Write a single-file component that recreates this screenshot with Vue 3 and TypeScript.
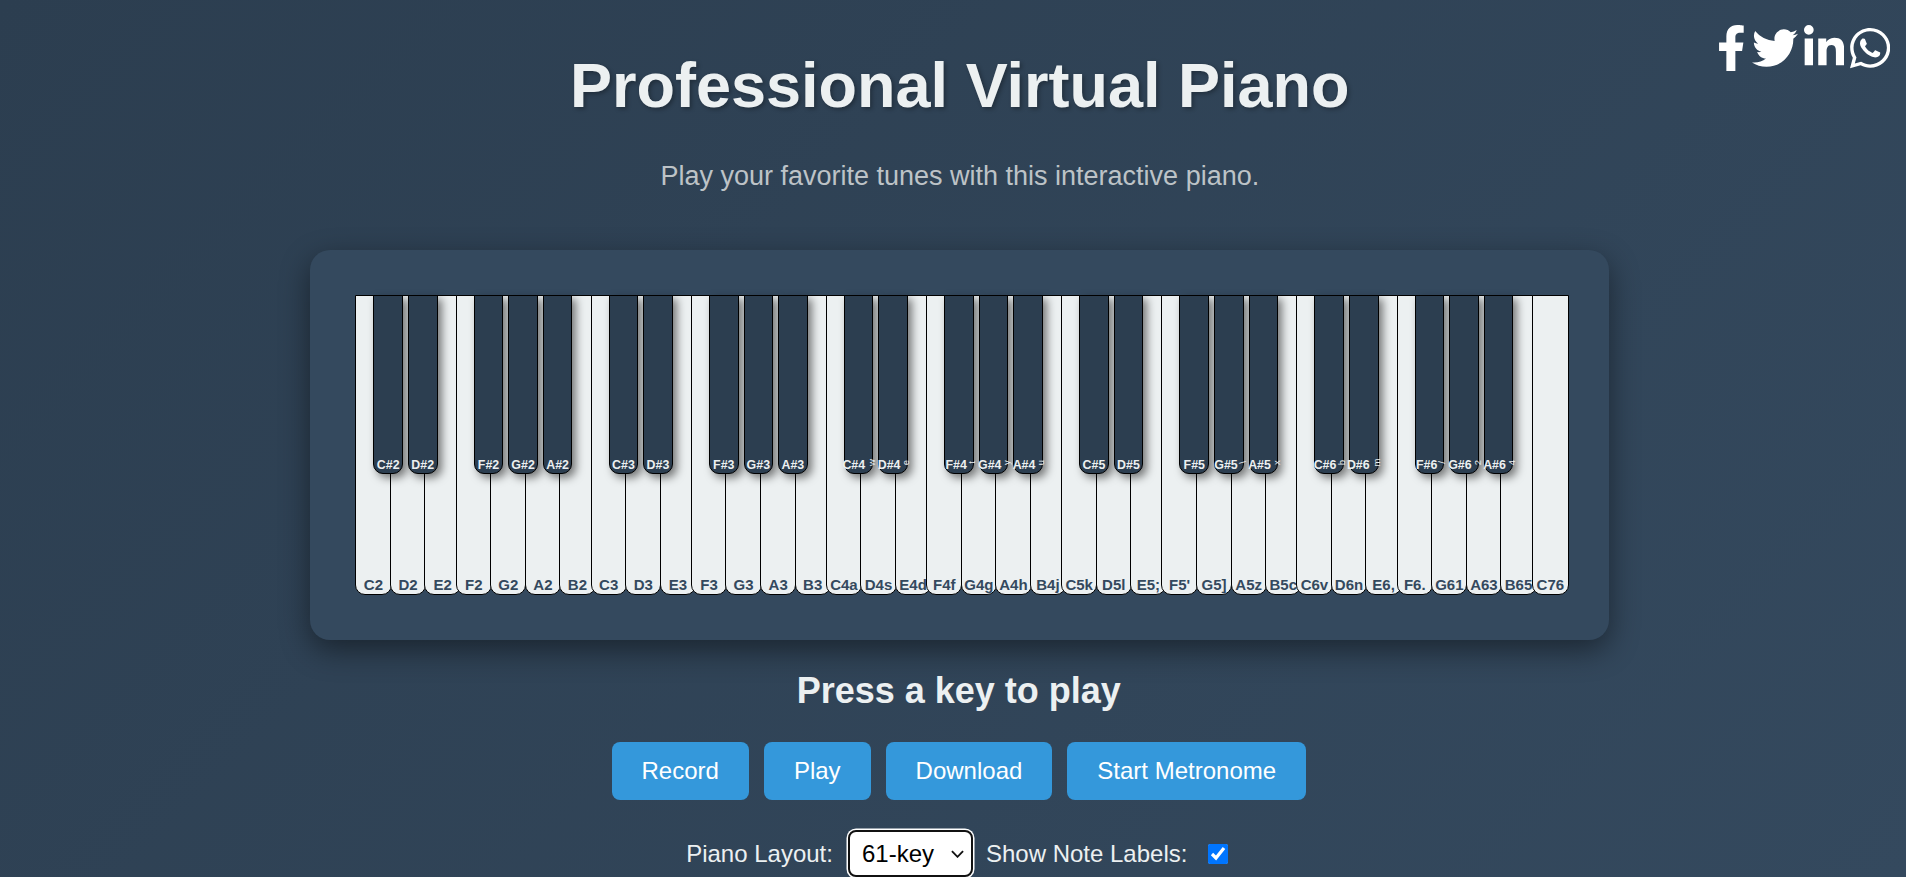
<script setup lang="ts">
import { ref } from 'vue'

interface PianoKey {
  name: string
  black: boolean
  hint: string
}

const whiteHints: Record<string, string> = {
  C4: 'a', D4: 's', E4: 'd', F4: 'f', G4: 'g', A4: 'h', B4: 'j',
  C5: 'k', D5: 'l', E5: ';', F5: "'", G5: ']', A5: 'z', B5: 'c',
  C6: 'v', D6: 'n', E6: ',', F6: '.', G6: '1', A6: '3', B6: '5', C7: '6'
}
const blackHints: Record<string, string> = {
  'C#4': 'w', 'D#4': 'e', 'F#4': 't', 'G#4': 'y', 'A#4': 'u',
  'G#5': '\\', 'A#5': 'x', 'C#6': 'b', 'D#6': 'm',
  'F#6': '/', 'G#6': '2', 'A#6': '4'
}

const keys: PianoKey[] = []
const scale = ['C', 'C#', 'D', 'D#', 'E', 'F', 'F#', 'G', 'G#', 'A', 'A#', 'B']
for (let octave = 2; octave <= 6; octave++) {
  for (const note of scale) {
    const name = note + octave
    const black = note.includes('#')
    keys.push({ name, black, hint: black ? blackHints[name] ?? '' : whiteHints[name] ?? '' })
  }
}
keys.push({ name: 'C7', black: false, hint: '6' })

const layout = ref('61-key')
const showLabels = ref(true)
</script>

<template>
  <div class="page">
    <nav class="social">
      <a class="social-link" aria-label="Facebook">
        <svg class="icon" viewBox="0 0 320 512"><path d="M279.14 288l14.22-92.66h-88.91v-60.13c0-25.35 12.42-50.06 52.24-50.06h40.42V6.26S260.43 0 225.36 0c-73.22 0-121.08 44.38-121.08 124.72v70.62H22.89V288h81.39v224h100.17V288z" /></svg>
      </a>
      <a class="social-link" aria-label="Twitter">
        <svg class="icon" viewBox="0 0 512 512"><path d="M459.37 151.716c.325 4.548.325 9.097.325 13.645 0 138.72-105.583 298.558-298.558 298.558-59.452 0-114.68-17.219-161.137-47.106 8.447.974 16.568 1.299 25.34 1.299 49.055 0 94.213-16.568 130.274-44.832-46.132-.975-84.792-31.188-98.112-72.772 6.498.974 12.995 1.624 19.818 1.624 9.421 0 18.843-1.3 27.614-3.573-48.081-9.747-84.143-51.98-84.143-102.985v-1.299c13.969 7.797 30.214 12.67 47.431 13.319-28.264-18.843-46.781-51.005-46.781-87.391 0-19.492 5.197-37.36 14.294-52.954 51.655 63.675 129.3 105.258 216.365 109.807-1.624-7.797-2.599-15.918-2.599-24.04 0-57.828 46.782-104.934 104.934-104.934 30.213 0 57.502 12.67 76.67 33.137 23.715-4.548 46.456-13.32 66.599-25.34-7.798 24.366-24.366 44.833-46.132 57.827 21.117-2.273 41.584-8.122 60.426-16.243-14.292 20.791-32.161 39.308-52.628 54.253z" /></svg>
      </a>
      <a class="social-link" aria-label="LinkedIn">
        <svg class="icon" viewBox="0 0 448 512"><path d="M100.28 448H7.4V148.9h92.88zM53.79 108.1C24.09 108.1 0 83.5 0 53.8a53.79 53.79 0 0 1 107.58 0c0 29.7-24.1 54.3-53.79 54.3zM447.9 448h-92.68V302.4c0-34.7-.7-79.2-48.29-79.2-48.29 0-55.69 37.7-55.69 76.7V448h-92.78V148.9h89.08v40.8h1.3c12.4-23.5 42.69-48.3 87.88-48.3 94 0 111.28 61.9 111.28 142.3V448z" /></svg>
      </a>
      <a class="social-link" aria-label="WhatsApp">
        <svg class="icon" viewBox="0 0 448 512"><path d="M380.9 97.1C339 55.1 283.2 32 223.9 32c-122.4 0-222 99.6-222 222 0 39.1 10.2 77.3 29.6 111L0 480l117.7-30.9c32.4 17.7 68.9 27 106.1 27h.1c122.3 0 224.1-99.6 224.1-222 0-59.3-25.2-115-67.1-157zm-157 341.6c-33.2 0-65.7-8.9-94-25.7l-6.7-4-69.8 18.3L72 359.2l-4.4-7c-18.5-29.4-28.2-63.3-28.2-98.2 0-101.7 82.8-184.5 184.6-184.5 49.3 0 95.6 19.2 130.4 54.1 34.8 34.9 56.2 81.2 56.1 130.5 0 101.8-84.9 184.6-186.6 184.6zm101.2-138.2c-5.5-2.8-32.8-16.2-37.9-18-5.1-1.9-8.8-2.8-12.5 2.8-3.7 5.6-14.3 18-17.6 21.8-3.2 3.7-6.5 4.2-12 1.4-32.6-16.3-54-29.1-75.5-66-5.7-9.8 5.7-9.1 16.3-30.3 1.8-3.7.9-6.9-.5-9.7-1.4-2.8-12.5-30.1-17.1-41.2-4.5-10.8-9.1-9.3-12.5-9.5-3.2-.2-6.9-.2-10.6-.2-3.7 0-9.7 1.4-14.8 6.9-5.1 5.6-19.4 19-19.4 46.3 0 27.3 19.9 53.7 22.6 57.4 2.8 3.7 39.1 59.7 94.8 83.8 35.2 15.2 49 16.5 66.6 13.9 10.7-1.6 32.8-13.4 37.4-26.4 4.6-13 4.6-24.1 3.2-26.4-1.3-2.5-5-3.9-10.5-6.6z" /></svg>
      </a>
    </nav>

    <main class="content">
      <h1 class="title">Professional Virtual Piano</h1>
      <p class="subtitle">Play your favorite tunes with this interactive piano.</p>

      <section class="panel">
        <div class="keyboard">
          <div
            v-for="key in keys"
            :key="key.name"
            class="key"
            :class="key.black ? 'black' : 'white'"
          >
            <span v-if="showLabels" class="label">{{ key.name }}<template v-if="!key.black">{{ key.hint }}</template><span v-else-if="key.hint" class="hint">{{ key.hint }}</span></span>
          </div>
        </div>
      </section>

      <h2 class="status">Press a key to play</h2>

      <div class="buttons">
        <button class="btn">Record</button>
        <button class="btn">Play</button>
        <button class="btn">Download</button>
        <button class="btn">Start Metronome</button>
      </div>

      <div class="options">
        <label class="opt-label" for="layout">Piano Layout:</label>
        <div class="select-wrap">
          <select id="layout" v-model="layout" class="select">
            <option>88-key</option>
            <option>61-key</option>
            <option>49-key</option>
          </select>
          <svg class="chevron" viewBox="0 0 14 8"><path d="M1 1l6 6 6-6" /></svg>
        </div>
        <label class="opt-label" for="labels">Show Note Labels:</label>
        <input id="labels" v-model="showLabels" class="check" type="checkbox" />
      </div>
    </main>
  </div>
</template>

<style>
html,
body {
  margin: 0;
  height: 100%;
  overflow: hidden;
}
body {
  background: linear-gradient(135deg, #2c3e50, #34495e);
}
</style>

<style scoped>
.page {
  position: relative;
  height: 877px;
  overflow: hidden;
  padding-left: 13.6px;
  box-sizing: border-box;
  font-family: "Liberation Sans", Arial, sans-serif;
  color: #ecf0f1;
}
.social {
  position: absolute;
  top: 25px;
  right: 16px;
  display: flex;
  gap: 6px;
}
.social-link {
  display: block;
  height: 46px;
}
.icon {
  display: block;
  height: 46px;
  fill: #fff;
}
.content {
  display: flex;
  flex-direction: column;
  align-items: center;
  padding-top: 49px;
}
.title {
  margin: 0;
  font-size: 63px;
  font-weight: 700;
  text-shadow: 2px 2px 4px rgba(0, 0, 0, 0.3);
}
.subtitle {
  margin: 40px 0 0;
  font-size: 27px;
  color: #bdc3c7;
}
.panel {
  width: 1299.4px;
  box-sizing: border-box;
  margin-top: 57.5px;
  padding: 45px;
  background: #34495e;
  border-radius: 20px;
  box-shadow: 0 10px 30px rgba(0, 0, 0, 0.45);
}
.keyboard {
  display: flex;
  height: 300px;
  margin-left: 0.2px;
}
.key {
  position: relative;
  flex: none;
  box-sizing: border-box;
  display: flex;
  justify-content: center;
  align-items: flex-end;
  border: 1px solid #000;
  border-radius: 0 0 10px 10px;
  white-space: nowrap;
  font-weight: 700;
}
.white {
  width: 36.3px;
  height: 300px;
  margin-right: -5.08px;
  padding-bottom: 1px;
  background: #ecf0f1;
  color: #34495e;
  font-size: 15px;
}
.white:last-child {
  width: 37.6px;
}
.black {
  z-index: 2;
  width: 29.6px;
  height: 179px;
  margin: 0 -13.125px;
  padding-bottom: 1px;
  background: #2c3e50;
  color: #ecf0f1;
  font-size: 12.4px;
  box-shadow: 4px 4px 8px rgba(0, 0, 0, 0.5);
}
.hint {
  display: inline-block;
  margin-left: 3px;
  font-size: 9.5px;
  font-weight: 400;
  vertical-align: 3px;
  transform: rotate(-90deg);
}
.status {
  margin: 30px 2px 0 0;
  font-size: 36px;
  font-weight: 700;
}
.buttons {
  display: flex;
  gap: 15px;
  margin: 30px 2px 0 0;
}
.btn {
  padding: 15px 30px;
  border: 0;
  border-radius: 8px;
  background: #3498db;
  color: #fff;
  font-family: inherit;
  font-size: 24px;
}
.options {
  display: flex;
  align-items: center;
  margin: 30.5px 5px 0 0;
}
.opt-label {
  font-size: 24px;
}
.select-wrap {
  position: relative;
  margin: 0 13px 0 15px;
}
.select {
  display: block;
  box-sizing: border-box;
  width: 125px;
  height: 47px;
  padding: 0 8px 0 12px;
  border: 2px solid #111;
  border-radius: 8px;
  box-shadow: 0 0 0 1.5px #fff;
  outline: none;
  appearance: none;
  background: #fff;
  color: #000;
  font-family: inherit;
  font-size: 24px;
}
.chevron {
  position: absolute;
  top: 20px;
  right: 9px;
  width: 13px;
  height: 8px;
  fill: none;
  stroke: #111;
  stroke-width: 2;
  pointer-events: none;
}
.check {
  width: 20px;
  height: 20px;
  margin: 0 0 0 21px;
}
</style>
